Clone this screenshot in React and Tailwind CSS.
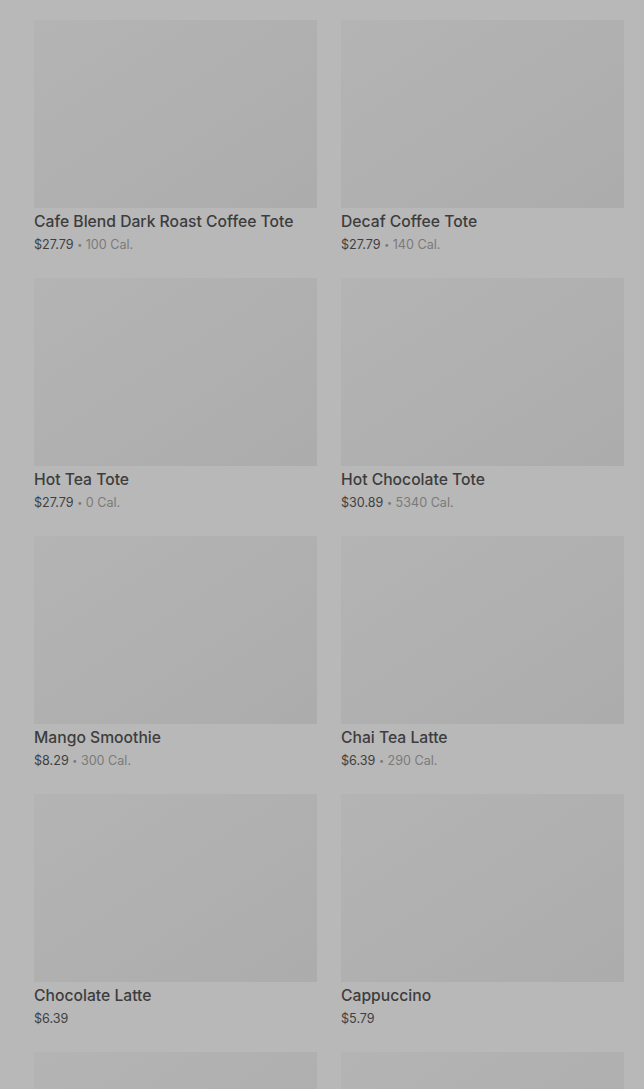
const items = [
  { name: "Cafe Blend Dark Roast Coffee Tote", price: "$27.79", cal: "100 Cal." },
  { name: "Decaf Coffee Tote", price: "$27.79", cal: "140 Cal." },
  { name: "Hot Tea Tote", price: "$27.79", cal: "0 Cal." },
  { name: "Hot Chocolate Tote", price: "$30.89", cal: "5340 Cal." },
  { name: "Mango Smoothie", price: "$8.29", cal: "300 Cal." },
  { name: "Chai Tea Latte", price: "$6.39", cal: "290 Cal." },
  { name: "Chocolate Latte", price: "$6.39" },
  { name: "Cappuccino", price: "$5.79" },
]

const ItemCard = ({ item }) => (
  <div className="flex flex-col">
    <div className="h-[188px] w-full bg-gradient-to-br from-[#b4b4b4] to-[#acacac]" />
    <div className="mt-[4px] text-[15.7px] leading-5 font-medium text-[#3d3d3d] truncate">{item.name}</div>
    <div className="mt-[4px] text-[12.6px] leading-[18px] text-[#3f3f3f]">
      {item.price}
      {item.cal && (
        <span className="text-[#7a7a7a]">
          {" "}
          <span className="text-[9px] align-[1px]">•</span> {item.cal}
        </span>
      )}
    </div>
  </div>
)

export default function App() {
  return (
    <div
      className="h-[1089px] overflow-hidden bg-[#b8b8b8] pt-5 pl-[34px] pr-5"
      style={{ fontFamily: "Inter, 'Noto Sans', sans-serif" }}
    >
      <div className="grid grid-cols-2 gap-x-6 gap-y-6">
        {items.map((item) => (
          <ItemCard key={item.name} item={item} />
        ))}
        <div className="h-[188px] bg-gradient-to-br from-[#b4b4b4] to-[#acacac]" />
        <div className="h-[188px] bg-gradient-to-br from-[#b4b4b4] to-[#acacac]" />
      </div>
    </div>
  )
}
